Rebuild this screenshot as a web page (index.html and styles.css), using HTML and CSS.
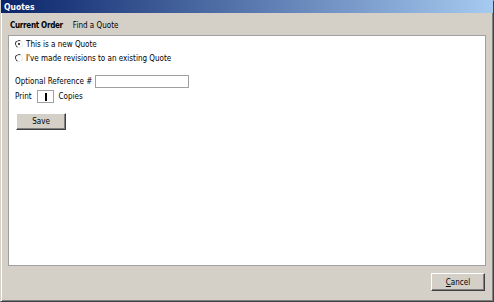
FILE: index.html
```html
<!DOCTYPE html>
<html lang="en">
  <head>
    <meta charset="UTF-8" />
    <title>Quotes</title>
    <link rel="stylesheet" href="styles.css">
  </head>
  <body>
    <div class="window">
      <div class="titlebar">Quotes</div>

      <div class="tabs">
        <span class="tab active">Current Order</span>
        <span class="tab">Find a Quote</span>
      </div>

      <div class="panel">
        <div class="radio-row">
          <span class="radio checked"></span>
          <span>This is a new Quote</span>
        </div>
        <div class="radio-row">
          <span class="radio"></span>
          <span>I've made revisions to an existing Quote</span>
        </div>

        <div class="field-row ref-row">
          <span>Optional Reference #</span>
          <span class="textbox ref-box"></span>
        </div>
        <div class="field-row print-row">
          <span>Print</span>
          <span class="textbox copies-box"><span class="caret"></span></span>
          <span>Copies</span>
        </div>

        <button class="btn save-btn">Save</button>
      </div>

      <div class="footer">
        <button class="btn cancel-btn"><u>C</u>ancel</button>
      </div>
    </div>
  </body>
</html>
```

FILE: styles.css
```css
body {
  margin: 0;
  padding: 0;
  font-family: "DejaVu Sans Condensed", "DejaVu Sans", sans-serif;
  font-size: 8px;
  color: #000;
}

.window {
  width: 494px;
  height: 302px;
  box-sizing: border-box;
  background-color: #d4d0c8;
  border: 1px solid;
  border-color: #d4d0c8 #404040 #404040 #d4d0c8;
  box-shadow: inset 1px 1px 0 #ffffff, inset -1px -1px 0 #808080;
  display: flex;
  flex-direction: column;
  padding: 0 2px 2px 2px;
}

.titlebar {
  height: 13px;
  margin: -1px -2px 0 -2px;
  padding-left: 3px;
  background: linear-gradient(to right, #0a246a, #a6caf0);
  color: white;
  font-weight: bold;
  font-size: 8.5px;
  line-height: 14px;
}

.tabs {
  display: flex;
  gap: 10px;
  height: 22px;
  box-sizing: border-box;
  align-items: center;
  padding: 3px 0 0 7px;
}

.tab.active {
  font-weight: bold;
  letter-spacing: -0.3px;
}

.panel {
  height: 231px;
  margin: 0 5px 0 5px;
  background-color: white;
  border: 1px solid #a0a0a0;
  padding: 1px 6px;
  box-sizing: border-box;
}

.radio-row {
  display: flex;
  align-items: center;
  gap: 3px;
  height: 14px;
}

.radio {
  width: 6px;
  height: 6px;
  border-radius: 50%;
  border: 1px solid;
  border-color: #404040 #e8e8e8 #e8e8e8 #404040;
  position: relative;
  transform: rotate(-20deg);
}

.radio.checked::after {
  content: "";
  position: absolute;
  left: 2px;
  top: 2px;
  width: 2px;
  height: 2px;
  border-radius: 50%;
  background-color: black;
}

.field-row {
  display: flex;
  align-items: center;
  gap: 3px;
}

.ref-row {
  margin-top: 9px;
  height: 14px;
}

.print-row {
  margin-top: 1px;
  height: 14px;
  gap: 5px;
}

.textbox {
  display: inline-block;
  box-sizing: border-box;
  border: 1px solid #a0a0a0;
  background-color: white;
}

.ref-box {
  width: 94px;
  height: 13px;
}

.copies-box {
  width: 17px;
  height: 13px;
  position: relative;
}

.caret {
  position: absolute;
  left: 7px;
  top: 2px;
  width: 2px;
  height: 8px;
  background-color: black;
}

.btn {
  font-family: "DejaVu Sans Condensed", "DejaVu Sans", sans-serif;
  font-size: 8px;
  background-color: #d4d0c8;
  border: 1px solid;
  border-color: #ffffff #404040 #404040 #ffffff;
  box-shadow: inset -1px -1px 0 #808080;
  padding: 0;
  color: black;
  box-sizing: border-box;
}

.save-btn {
  display: block;
  margin-top: 10px;
  margin-left: 1px;
  width: 50px;
  height: 17px;
}

.footer {
  flex: 1;
  display: flex;
  justify-content: flex-end;
  align-items: flex-start;
  padding: 7px 6px 0 0;
}

.cancel-btn {
  width: 54px;
  height: 18px;
}

.cancel-btn u {
  text-decoration: underline;
}
```
